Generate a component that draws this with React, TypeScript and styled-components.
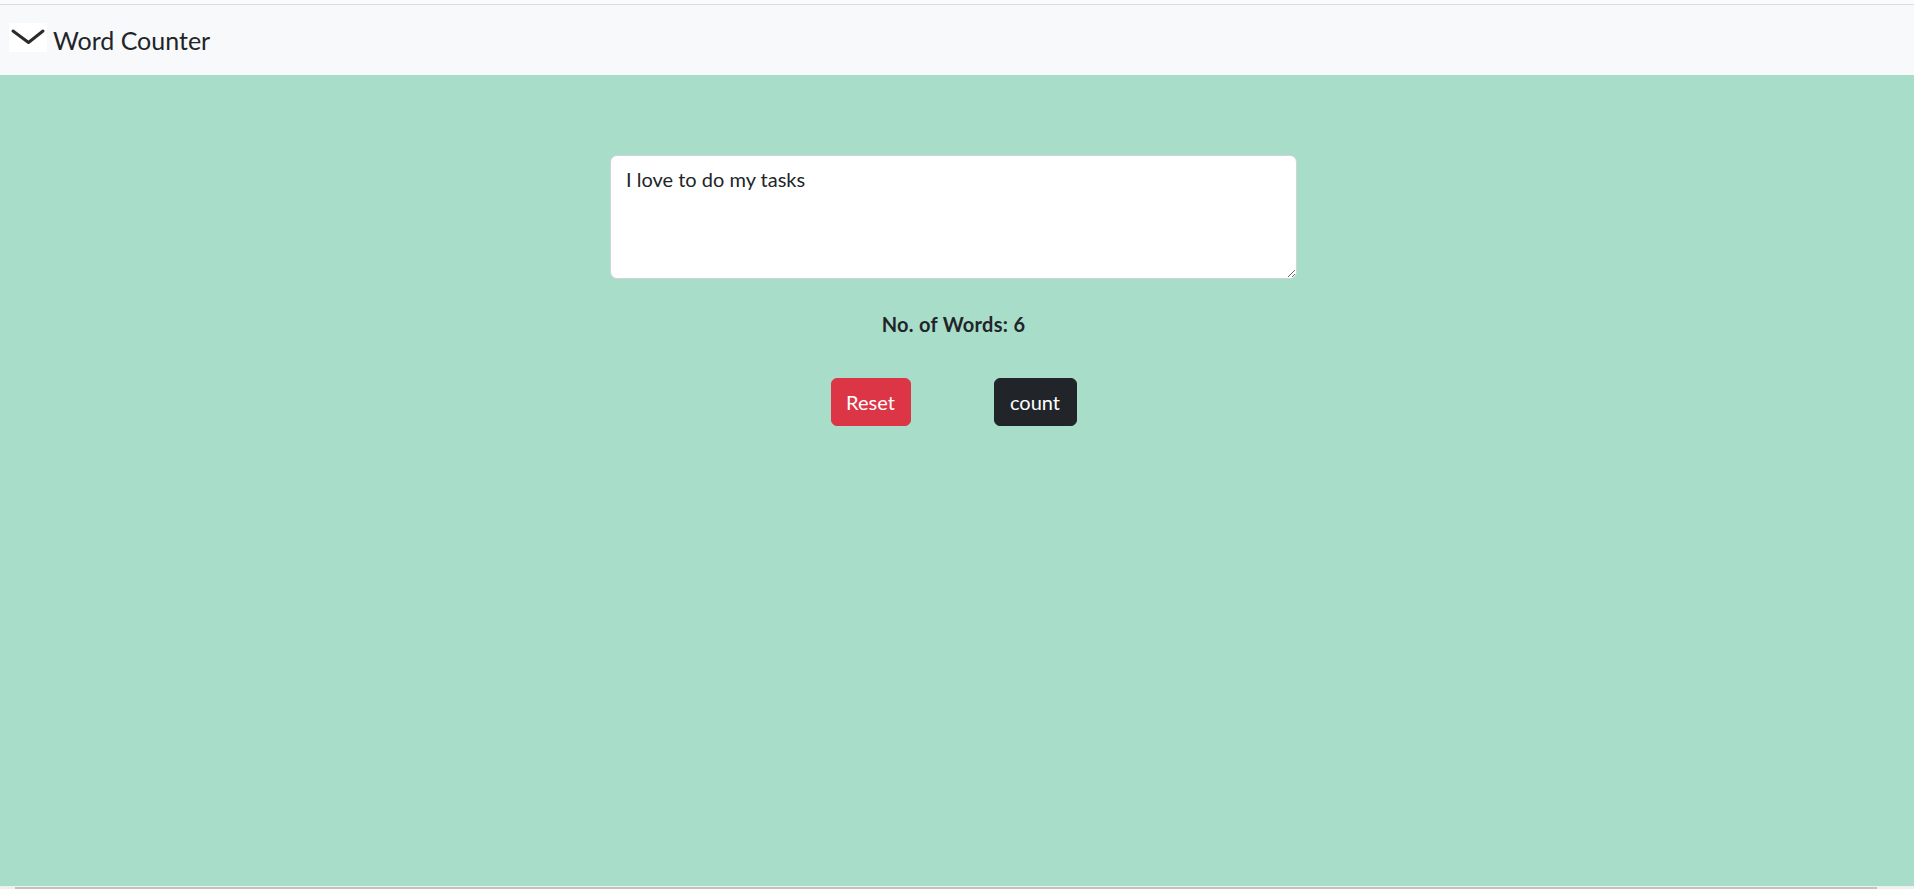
import React, { useState } from "react";
import styled, { createGlobalStyle } from "styled-components";

const GlobalStyle = createGlobalStyle`
  html, body {
    margin: 0;
    padding: 0;
    height: 100%;
    overflow: hidden;
  }
  body {
    font-family: "Lato", "Noto Sans", "Liberation Sans", sans-serif;
    color: #212529;
    background: #ffffff;
  }
  * { box-sizing: border-box; }
`;

const Page = styled.div`
  display: flex;
  flex-direction: column;
  height: 889px;
  width: 1914px;
`;

const TopEdge = styled.div`
  height: 5px;
  background: #fbfbfc;
  border-bottom: 1px solid #dcdcdc;
  flex: none;
`;

const Navbar = styled.nav`
  height: 70px;
  flex: none;
  background: #f8f9fa;
  display: flex;
  align-items: center;
  padding-left: 9px;
`;

const ToggleBox = styled.span`
  width: 38px;
  height: 29px;
  background: #ffffff;
  display: flex;
  align-items: center;
  justify-content: center;
  margin-top: -5px;
`;

const Brand = styled.span`
  font-size: 25px;
  line-height: 30px;
  color: #212529;
  margin-left: 6px;
  margin-top: -1px;
  font-weight: 400;
`;

const Main = styled.main`
  flex: 1;
  background: #a8ddc9;
  display: flex;
  flex-direction: column;
  align-items: center;
  padding-top: 80px;
  padding-right: 7px;
`;

const TextBox = styled.textarea`
  width: 687px;
  height: 124px;
  border: 1px solid #ced4da;
  border-radius: 7px;
  background: #ffffff;
  padding: 8px 15px;
  font-family: inherit;
  font-size: 20px;
  line-height: 30px;
  color: #212529;
  outline: none;
  resize: both;
`;

const Count = styled.p`
  margin: 30px 0 0;
  font-size: 20px;
  letter-spacing: 0.3px;
  line-height: 30px;
  font-weight: 700;
  color: #212529;
`;

const ButtonRow = styled.div`
  display: flex;
  gap: 83px;
  margin-top: 39px;
`;

const Button = styled.button<{ $variant: "danger" | "dark"; $w: number }>`
  width: ${(p) => p.$w}px;
  height: 48px;
  display: flex;
  align-items: center;
  justify-content: center;
  border-radius: 6px;
  border: 1px solid ${(p) => (p.$variant === "danger" ? "#dc3545" : "#212529")};
  background: ${(p) => (p.$variant === "danger" ? "#dc3545" : "#212529")};
  color: #ffffff;
  font-family: inherit;
  font-size: 20px;
  line-height: 30px;
  padding: 0;
  cursor: pointer;
`;

const ScrollStrip = styled.div`
  height: 3px;
  flex: none;
  background: #f0f0f0;
  padding: 1px 37px 0 15px;
`;

const ScrollThumb = styled.div`
  height: 2px;
  background: #c1c1c1;
`;

function countWords(s: string) {
  return s.split(/\s+/).filter((w) => w.length > 0).length;
}

export default function App() {
  const [text, setText] = useState("I love to do my tasks");
  const [words, setWords] = useState(countWords("I love to do my tasks"));

  return (
    <>
      <GlobalStyle />
      <Page>
        <TopEdge />
        <Navbar>
          <ToggleBox>
            <svg width="38" height="29" viewBox="0 0 38 29" fill="none">
              <path
                d="M4 8 L19.5 19.5 L34 8"
                stroke="#2b2b2b"
                strokeWidth="3"
                strokeLinecap="round"
                strokeLinejoin="round"
              />
            </svg>
          </ToggleBox>
          <Brand>Word Counter</Brand>
        </Navbar>
        <Main>
          <TextBox value={text} onChange={(e) => setText(e.target.value)} />
          <Count>No. of Words: {words}</Count>
          <ButtonRow>
            <Button
              $variant="danger"
              $w={80}
              onClick={() => {
                setText("");
                setWords(0);
              }}
            >
              Reset
            </Button>
            <Button $variant="dark" $w={83} onClick={() => setWords(countWords(text))}>
              count
            </Button>
          </ButtonRow>
        </Main>
        <ScrollStrip>
          <ScrollThumb />
        </ScrollStrip>
      </Page>
    </>
  );
}
